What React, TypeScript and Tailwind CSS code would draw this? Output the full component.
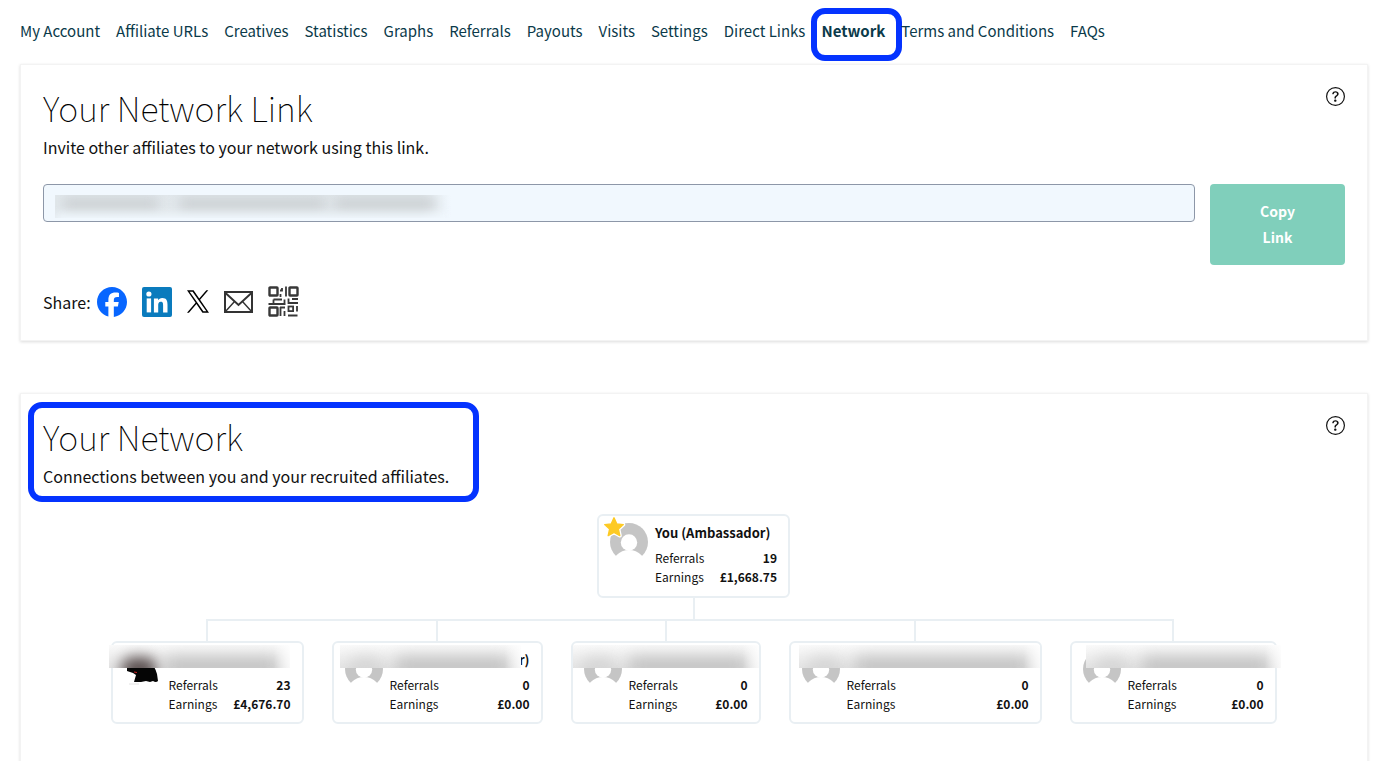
import type { ReactNode } from 'react'
import clsx from 'clsx'
import { BsQuestionCircle } from 'react-icons/bs'
import { FaFacebook } from 'react-icons/fa6'

const tabs = [
  'My Account',
  'Affiliate URLs',
  'Creatives',
  'Statistics',
  'Graphs',
  'Referrals',
  'Payouts',
  'Visits',
  'Settings',
  'Direct Links',
  'Network',
  'Terms and Conditions',
  'FAQs',
]

type Affiliate = {
  referrals: number
  earnings: string
  width: string
  mask: string
  nameEnd?: string
  photo?: boolean
}

const recruits: Affiliate[] = [
  { referrals: 23, earnings: '£4,676.70', width: 'w-[193px]', mask: '-left-1 right-3', photo: true },
  { referrals: 0, earnings: '£0.00', width: 'w-[211px]', mask: 'left-1.5 right-5', nameEnd: 'r)' },
  { referrals: 0, earnings: '£0.00', width: 'w-[190px]', mask: 'left-0 right-0' },
  { referrals: 0, earnings: '£0.00', width: 'w-[253px]', mask: 'left-2 right-0' },
  { referrals: 0, earnings: '£0.00', width: 'w-[207px]', mask: 'left-3.5 -right-1.5' },
]

function Avatar() {
  return (
    <svg viewBox="0 0 38 38" className="size-[38px]" aria-hidden="true">
      <clipPath id="head">
        <path d="M0 0 H38 V33 H0 Z" />
      </clipPath>
      <g clipPath="url(#head)">
        <circle cx="19" cy="19" r="19" fill="#c5c5c5" />
        <circle cx="19" cy="19.5" r="8.2" fill="#fff" />
        <circle cx="19" cy="44.7" r="17.7" fill="#fff" />
      </g>
    </svg>
  )
}

function Photo() {
  return (
    <svg viewBox="0 0 38 38" className="size-[38px]" aria-hidden="true">
      <path d="M3 14 L8 10 H24 Q31 16 33 24 L34 31 Q32 33 29 31 L26 32 L22 31 L17 32 L10 32 L12 25 L9 23 L3 21 Z" fill="#050505" />
      <path d="M10 22 l3 0.5" stroke="#c22" strokeWidth="1" />
      <path d="M5 34 h10" stroke="#e2e2e2" strokeWidth="1" />
    </svg>
  )
}

function Star() {
  return (
    <svg viewBox="0 0 24 24" className="absolute -left-2 -top-2 size-6" aria-hidden="true">
      <path
        d="M12 2.8 L14.7 8.9 L21.3 9.6 L16.4 14.1 L17.8 20.6 L12 17.3 L6.2 20.6 L7.6 14.1 L2.7 9.6 L9.3 8.9 Z"
        fill="#fff"
        stroke="#fff"
        strokeWidth="4"
        strokeLinejoin="round"
      />
      <path
        d="M12 2.8 L14.7 8.9 L21.3 9.6 L16.4 14.1 L17.8 20.6 L12 17.3 L6.2 20.6 L7.6 14.1 L2.7 9.6 L9.3 8.9 Z"
        fill="#fdca24"
        stroke="#fdca24"
        strokeWidth="1.4"
        strokeLinejoin="round"
      />
    </svg>
  )
}

function LinkedInIcon() {
  return (
    <svg viewBox="0 0 30 30" className="size-[30px]" aria-hidden="true">
      <rect width="30" height="30" rx="2" fill="#0a7bbd" />
      <circle cx="6.9" cy="7" r="2.6" fill="#fff" />
      <path d="M4.7 11.4 h4.4 V25.4 h-4.4 Z" fill="#fff" />
      <path
        d="M11.9 11.4 h4.2 v1.9 c.7-1.3 2.1-2.3 4.2-2.3 4.4 0 5.2 2.9 5.2 6.7 v7.7 h-4.4 v-6.8 c0-1.7 0-3.8-2.3-3.8 s-2.6 1.8-2.6 3.7 v6.9 h-4.3 Z"
        fill="#fff"
      />
    </svg>
  )
}

function XIcon() {
  return (
    <svg viewBox="0 0 1200 1227" className="h-[23px] w-[22px]" aria-hidden="true">
      <path d="M714.163 519.284L1160.89 0H1055.03L667.137 450.887L357.328 0H0L468.492 681.821L0 1226.37H105.866L515.491 750.218L842.672 1226.37H1200L714.137 519.284H714.163ZM569.165 687.828L521.697 619.934L144.011 79.6944H306.615L611.412 515.685L658.88 583.579L1055.08 1150.3H892.476L569.165 687.854V687.828Z" />
    </svg>
  )
}

function MailIcon() {
  return (
    <svg viewBox="0 0 29 22" className="h-[22px] w-[29px]" fill="none" stroke="#333" aria-hidden="true">
      <rect x="1" y="1" width="27" height="20" strokeWidth="2" />
      <path d="M1.5 2 L14.5 14 L27.5 2" strokeWidth="2" />
      <path d="M1.5 20.5 L10.5 10.5 M27.5 20.5 L18.5 10.5" strokeWidth="1.4" />
    </svg>
  )
}

function QrIcon() {
  return (
    <svg viewBox="0 0 31 31" className="size-[31px]" fill="none" stroke="#383838" strokeWidth="2.4" aria-hidden="true">
      <rect x="1.5" y="1.5" width="8" height="8" rx="0.6" />
      <rect x="21.5" y="1.5" width="8" height="8" rx="0.6" />
      <rect x="1.5" y="21.5" width="8" height="8" rx="0.6" />
      <rect x="20.5" y="20.5" width="4.6" height="4.6" strokeWidth="1.8" />
      <path
        d="M12 4.5 h2.5 M14 2 v3.5 M18 0.5 v10 M12.5 8 v3 M5.5 13.5 h8.5 M0.5 18 h17 M16.5 13.5 v5 M5.5 13.5 v4 M20.5 12.5 v4.5 h9.5 M24 13 h6 M12 21.5 h5 M12.5 21 v9 M29 20 v5.5 M16.5 25 v5 M20 29.5 h9.5"
        strokeWidth="1.8"
      />
    </svg>
  )
}

function Stats({ referrals, earnings }: { referrals: number; earnings: string }) {
  return (
    <dl className="text-xs leading-[19px]">
      <div className="flex justify-between">
        <dt>Referrals</dt>
        <dd className="font-bold">{referrals}</dd>
      </div>
      <div className="flex justify-between">
        <dt>Earnings</dt>
        <dd className="font-bold">{earnings}</dd>
      </div>
    </dl>
  )
}

function Person({ person }: { person: Affiliate }) {
  return (
    <div className={clsx('relative flex h-[83px] gap-[7px] rounded-md border-2 border-[#e9eff3] px-[11px] py-[7px]', person.width)}>
      <div className="shrink-0">{person.photo ? <Photo /> : <Avatar />}</div>
      <div className="flex-1">
        <div className="h-[25px] text-right text-[13px] font-bold leading-5">{person.nameEnd}</div>
        <Stats referrals={person.referrals} earnings={person.earnings} />
      </div>
      {/* blurred name */}
      <div className={clsx('absolute top-0.5 h-[23px] overflow-hidden bg-linear-to-b from-[#fafafa] to-[#e4e4e4]', person.mask)}>
        <div
          className={clsx(
            'absolute top-3 h-6 w-9 rounded-full blur-[7px]',
            person.photo ? 'left-3 bg-[#5a4f4f]' : 'left-2 bg-[#d6d6d6]',
          )}
        />
        <div className="absolute left-14 right-3 top-3 h-5 bg-[#c2c2c2] blur-[8px]" />
        <div className="absolute inset-y-0 right-0 w-4 bg-linear-to-r from-transparent to-white/80" />
      </div>
    </div>
  )
}

function Panel({ title, text, marked, children }: { title: string; text: string; marked?: boolean; children: ReactNode }) {
  return (
    <section className="border border-[#f3f3f3] px-[22px] pt-[22px] shadow-[0_1px_3px_rgba(0,0,0,0.14)]">
      <div className="flex items-start justify-between">
        <div className="relative">
          <h2 className="text-[34px] font-thin leading-[42px] text-black">{title}</h2>
          <p className="mt-1.5 text-base leading-6">{text}</p>
          {marked && (
            <div className="pointer-events-none absolute -bottom-[14px] -left-[15px] -right-[30px] -top-[14px] rounded-[14px] border-6 border-[#0433ff]" />
          )}
        </div>
        <button type="button" aria-label="Help">
          <BsQuestionCircle className="size-[19px]" />
        </button>
      </div>
      {children}
    </section>
  )
}

export default function App() {
  return (
    <main className="bg-white pl-5 pr-3 font-['Noto_Sans_CJK_SC',sans-serif] text-[#111]">
      <nav className="flex h-16 gap-4 whitespace-nowrap text-[15px] text-[#0b3a4a]">
        {tabs.map((tab) => (
          <a key={tab} href="#" className={clsx('relative mt-[19px] h-6 leading-6', tab === 'Network' && 'font-bold')}>
            {tab}
            {tab === 'Network' && (
              <span className="pointer-events-none absolute -bottom-[18px] -left-[10px] -right-[17px] -top-[11px] rounded-[14px] border-6 border-[#0433ff]" />
            )}
          </a>
        ))}
      </nav>

      <Panel title="Your Network Link" text="Invite other affiliates to your network using this link.">
        <div className="mt-[25px] flex items-start gap-[15px]">
          <div className="relative flex-1">
            <input
              readOnly
              aria-label="Network link"
              className="block h-[38px] w-full rounded border border-[#8d97a8] bg-[#f1f8fe] px-3"
            />
            <div className="pointer-events-none absolute left-3 top-[11px] h-[23px] w-[396px] overflow-hidden bg-linear-to-r from-[#e2e8ec] via-[#e0e6ea] via-92% to-[#f1f8fe]">
              <div className="absolute left-2 top-0.5 h-3.5 w-[95px] bg-[#cdd2d5] blur-[6px]" />
              <div className="absolute left-[125px] top-0.5 h-3.5 w-[145px] bg-[#cdd2d5] blur-[6px]" />
              <div className="absolute left-[280px] top-0.5 h-3.5 w-[100px] bg-[#cdd2d5] blur-[6px]" />
              <div className="absolute -bottom-2 left-0 right-0 h-3 bg-[#f1f8fe] blur-[5px]" />
            </div>
          </div>
          <button
            type="button"
            className="h-[81px] w-[135px] rounded bg-[#80cfbb] px-12 pb-0.5 text-sm font-bold leading-[26px] text-white"
          >
            Copy Link
          </button>
        </div>
        <div className="flex items-center pb-[23px] pt-[21px]">
          <span className="text-base leading-6">Share:</span>
          <div className="ml-1.5 flex items-center gap-[15px]">
            <a href="#" aria-label="Facebook">
              <FaFacebook className="size-[30px] text-[#0866ff]" />
            </a>
            <a href="#" aria-label="LinkedIn">
              <LinkedInIcon />
            </a>
            <a href="#" aria-label="X">
              <XIcon />
            </a>
            <a href="#" aria-label="Email">
              <MailIcon />
            </a>
            <a href="#" aria-label="QR code">
              <QrIcon />
            </a>
          </div>
        </div>
      </Panel>

      <div className="mt-[52px]">
        <Panel marked title="Your Network" text="Connections between you and your recruited affiliates.">
          <div className="flex flex-col items-center pb-16 pr-px pt-[26px]">
            <div className="flex h-[84px] w-[193px] gap-[7px] rounded-md border-2 border-[#e9eff3] px-[11px] py-[7px]">
              <div className="relative shrink-0">
                <Avatar />
                <Star />
              </div>
              <div className="flex-1">
                <div className="h-[25px] whitespace-nowrap text-[13px] font-bold leading-5">You (Ambassador)</div>
                <Stats referrals={19} earnings="£1,668.75" />
              </div>
            </div>
            <div className="h-[21px] w-0.5 bg-[#e9eff3]" />
            <ul className="flex">
              {recruits.map((person, i) => (
                <li key={i}>
                  <div className="flex h-[22px]">
                    <div className={clsx('flex-1', i > 0 && 'border-t-2 border-[#e9eff3]')} />
                    <div className="w-0.5 bg-[#e9eff3]" />
                    <div className={clsx('flex-1', i < recruits.length - 1 && 'border-t-2 border-[#e9eff3]')} />
                  </div>
                  <div className="px-[14px]">
                    <Person person={person} />
                  </div>
                </li>
              ))}
            </ul>
          </div>
        </Panel>
      </div>
    </main>
  )
}
